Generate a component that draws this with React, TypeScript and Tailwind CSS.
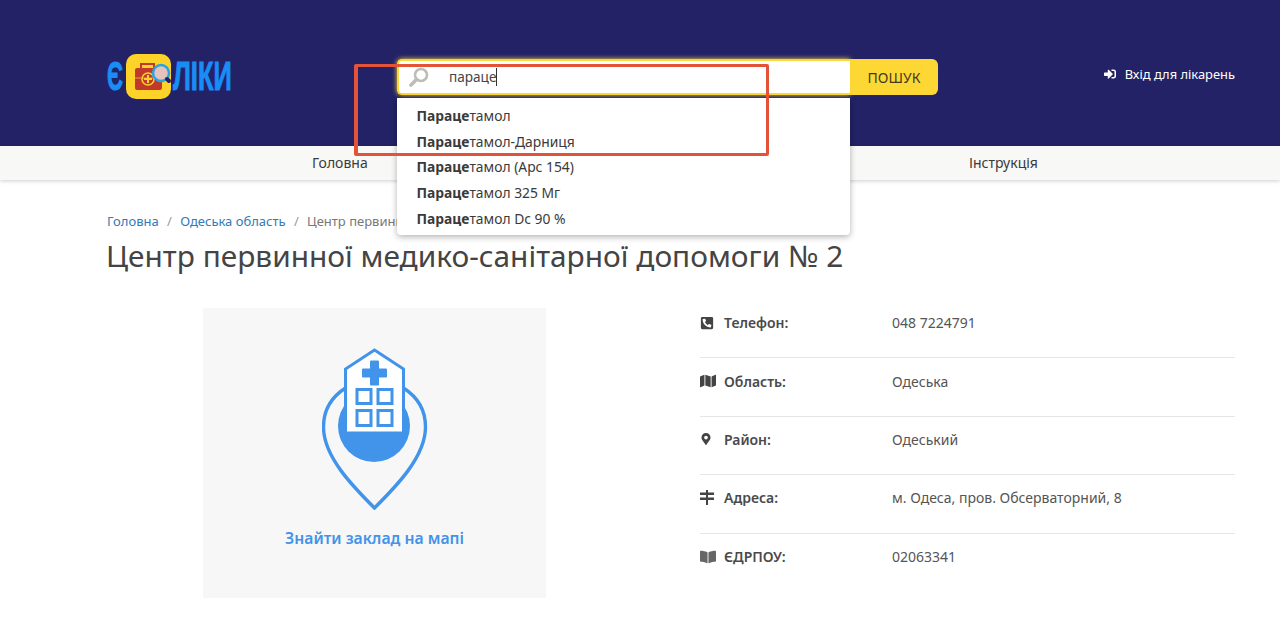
import { FaBookOpen, FaMap, FaMapMarkerAlt, FaPhoneSquareAlt, FaSignInAlt } from "react-icons/fa";

const font = { fontFamily: '"Noto Sans", sans-serif' };

const SUGGESTIONS = ["тамол", "тамол-Дарниця", "тамол (Арс 154)", "тамол 325 Мг", "тамол Dc 90 %"];

function SignGlyph() {
  return (
    <svg width="14" height="15" viewBox="0 0 14 15" fill="#444">
      <path d="M6 0h2v15H6z" />
      <path d="M0 2.5h14v2.6H0zM0 7.5h14v2.6H0z" />
    </svg>
  );
}

const DETAILS = [
  { icon: <FaPhoneSquareAlt className="text-[14px]" />, label: "Телефон:", value: "048 7224791" },
  { icon: <FaMap className="text-[16px]" />, label: "Область:", value: "Одеська" },
  { icon: <FaMapMarkerAlt className="text-[12px]" />, label: "Район:", value: "Одеський" },
  { icon: <SignGlyph />, label: "Адреса:", value: "м. Одеса, пров. Обсерваторний, 8" },
  { icon: <FaBookOpen className="text-[16px] text-[#666]" />, label: "ЄДРПОУ:", value: "02063341" },
];

function Logo() {
  return (
    <div className="flex h-[45px] w-[125px] items-center" style={{ fontFamily: '"Liberation Sans", sans-serif' }}>
      <span className="w-[19px] origin-left scale-x-[0.55] text-[41px] leading-none font-bold text-[#1a8cf5] [-webkit-text-stroke:1px_#1a8cf5]">Є</span>
      <svg width="45" height="45" viewBox="0 0 45 45" className="shrink-0 overflow-visible">
        <rect width="45" height="45" rx="10" fill="#fdd32a" />
        <path d="M15 14v-4h13v4" fill="none" stroke="#c0392b" strokeWidth="2" />
        <rect x="9" y="14" width="27" height="22" rx="2" fill="#c0392b" />
        <path d="M9 24h27" stroke="#e8a23a" strokeWidth="1" />
        <circle cx="22" cy="25" r="6" fill="none" stroke="#fdd32a" strokeWidth="1.5" />
        <path d="M22 21v8M18 25h8" stroke="#fdd32a" strokeWidth="2" />
        <circle cx="35" cy="19" r="8" fill="#e6c2bc" stroke="#2aa4e0" strokeWidth="2.5" />
        <path d="M41 25l2 2" stroke="#232266" strokeWidth="4" strokeLinecap="round" />
      </svg>
      <span className="ml-[2px] origin-left scale-x-[0.62] text-[41px] leading-none font-bold whitespace-nowrap text-[#1a8cf5] [-webkit-text-stroke:1px_#1a8cf5]">ЛІКИ</span>
    </div>
  );
}

function SearchGlyph() {
  return (
    <svg width="20" height="20" viewBox="0 0 20 20" fill="none" stroke="#bdbdb5" className="-ml-[1px]">
      <circle cx="12" cy="8" r="6" strokeWidth="2.6" />
      <path d="M7.5 12.5L2 18" strokeWidth="3.6" strokeLinecap="round" />
    </svg>
  );
}

function HospitalPin() {
  return (
    <svg width="106" height="162" viewBox="0.5 0 106 162" fill="none">
      <path d="M24 40C10 49 2 62 2 79c0 30 30 60 51 81 21-21 51-51 51-81 0-17-8-30-22-39" stroke="#4293ea" strokeWidth="3.4" />
      <circle cx="52.5" cy="78" r="36" fill="#4293ea" />
      <path d="M24 85V21L53 2l29 19v64z" fill="#fff" stroke="#4293ea" strokeWidth="3" />
      <path d="M49 13h8v8h8v8h-8v8h-8v-8h-8v-8h8z" fill="#4293ea" stroke="#4293ea" strokeLinejoin="round" />
      <g stroke="#4293ea" strokeWidth="3" fill="#fff">
        <rect x="35.5" y="41.5" width="14" height="14" />
        <rect x="56.5" y="41.5" width="14" height="14" />
        <rect x="35.5" y="62.5" width="14" height="15" />
        <rect x="56.5" y="62.5" width="14" height="15" />
      </g>
    </svg>
  );
}

export default function App() {
  return (
    <div className="relative h-[618px] overflow-hidden bg-white text-[#3a3a3a]" style={font}>
      <header className="flex h-[146px] items-start bg-[#232266] pr-[45px] pl-[107px]">
        <div className="mt-[54px]">
          <Logo />
        </div>
        <div className="relative mt-[59px] ml-[165px] flex h-9 w-[541px]">
          <div className="flex h-[36px] w-[453px] items-center gap-[20px] rounded-l-[5px] border-2 border-r-0 border-[#fdd835] bg-white pl-[11px] shadow-[0_0_5px_#fdd835]">
            <SearchGlyph />
            <span className="text-[13.6px] leading-none text-[#444]">параце</span>
            <span className="-ml-[20px] h-[18px] w-px bg-[#333]" />
          </div>
          <button className="h-[36px] w-[88px] rounded-r-[6px] bg-[#fdd835] text-[14px] text-[#3d3a1e]">ПОШУК</button>
          <ul className="absolute top-[39px] left-0 z-10 w-[453px] rounded-b-[4px] bg-white pt-[5px] pb-[4px] pl-[19.5px] text-[13.85px] shadow-[0_2px_6px_rgba(0,0,0,0.3)]">
            {SUGGESTIONS.map((s) => (
              <li key={s} className="h-[25.7px] leading-[25.7px] whitespace-nowrap">
                <b className="font-bold">Параце</b>
                {s}
              </li>
            ))}
          </ul>
        </div>
        <a className="mt-[65px] ml-auto flex items-center gap-[9px] text-[12.9px] leading-[18px] text-white">
          <FaSignInAlt className="text-[12px]" />
          Вхід для лікарень
        </a>
      </header>

      <nav className="flex h-[34px] items-center bg-[#f8f8f6] pb-[2px] pl-[312px] text-[14px] shadow-[0_1px_4px_rgba(0,0,0,0.2)]">
        <span className="w-[410px]">Головна</span>
        <span className="w-[247px] whitespace-nowrap">Про проект</span>
        <span>Інструкція</span>
      </nav>

      <main className="pt-[32px] pr-[45px] pl-[107px]">
        <div className="flex h-[18px] items-center gap-[8.3px] text-[13px] leading-none text-[#9a9a9a]">
          <a className="text-[#337ab7]">Головна</a>
          <span>/</span>
          <a className="text-[#337ab7]">Одеська область</a>
          <span>/</span>
          <span className="text-[#777]">Центр первинної медико-санітарної допомоги № 2</span>
        </div>
        <h1 className="mt-[6px] -ml-[1px] text-[29.85px] leading-[40px] text-[#444]">Центр первинної медико-санітарної допомоги № 2</h1>

        <div className="mt-[32px] flex">
          <div className="w-[533px] pl-[96px]">
            <div className="flex h-[290px] w-[343px] flex-col items-center bg-[#f7f7f7] pt-[40px]">
              <HospitalPin />
              <span className="mt-[18px] text-[15.7px] leading-5 font-semibold text-[#4293ea]">Знайти заклад на мапі</span>
            </div>
          </div>
          <dl className="ml-[60px] w-[535px] text-[14px]">
            {DETAILS.map((d, i) => (
              <div key={d.label} className={`flex h-[58.4px] items-center pb-[12px] ${i < 4 ? "border-b border-[#e6e6e6]" : ""} -translate-y-[8px]`}>
                <span className="flex w-[24px] shrink-0 text-[#444]">{d.icon}</span>
                <dt className="w-[168px] shrink-0 font-semibold text-[#4a4a4a]">{d.label}</dt>
                <dd className="text-[#555]">{d.value}</dd>
              </div>
            ))}
          </dl>
        </div>
      </main>

      {/* annotation box drawn over the screenshot */}
      <div className="absolute top-[64px] left-[354px] z-20 h-[92px] w-[415px] rounded-[2px] border-[3px] border-l-4 border-[#e2533a]" />
    </div>
  );
}
